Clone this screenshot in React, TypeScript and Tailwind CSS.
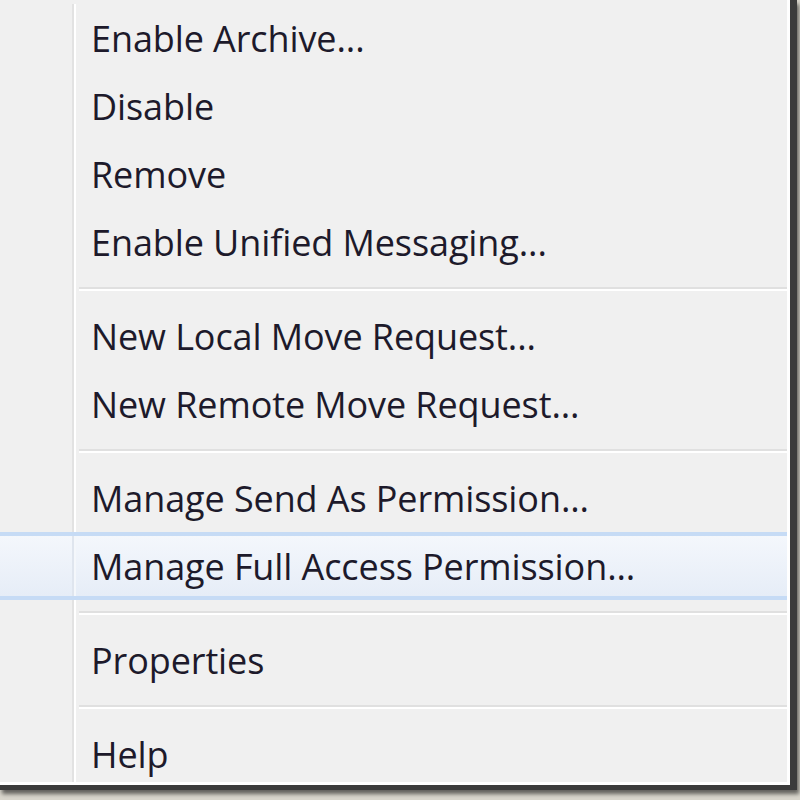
import React from "react";

type Entry = { label: string; active?: boolean } | "sep";

const entries: Entry[] = [
  { label: "Enable Archive..." },
  { label: "Disable" },
  { label: "Remove" },
  { label: "Enable Unified Messaging..." },
  "sep",
  { label: "New Local Move Request..." },
  { label: "New Remote Move Request..." },
  "sep",
  { label: "Manage Send As Permission..." },
  { label: "Manage Full Access Permission...", active: true },
  "sep",
  { label: "Properties" },
  "sep",
  { label: "Help" },
];

const Gutter = ({ faint }: { faint?: boolean }) => (
  <div className="flex shrink-0 self-stretch">
    <div className="w-[72px]" />
    <div className={faint ? "w-[2px] bg-[#dfe5ee]" : "w-[2px] bg-[#e2e2e2]"} />
    <div className={faint ? "w-[2px] bg-[#f4f7fb]" : "w-[2px] bg-white"} />
  </div>
);

const MenuRow = ({ label, active }: { label: string; active?: boolean }) => (
  <div
    className={
      active
        ? "flex h-[68px] border-y-[4px] border-[#c6dbf5] bg-gradient-to-b from-[#f4f7fc] to-[#e6edf7]"
        : "flex h-[68px]"
    }
  >
    <Gutter faint={active} />
    <div className="flex items-center pl-[15px] pt-[1px] text-[36px] font-medium leading-none tracking-[-0.1px] text-[#1d1a2b] whitespace-nowrap">
      {label}
    </div>
  </div>
);

const Separator = () => (
  <div className="flex h-[26px]">
    <Gutter />
    <div className="flex flex-1 flex-col justify-center pl-[3px]">
      <div className="h-[2px] bg-[#e0e0e0]" />
      <div className="h-[2px] bg-white" />
    </div>
  </div>
);

export default function App() {
  return (
    <div className="h-[800px] w-[800px] overflow-hidden bg-[#d9d6cc] font-['Open_Sans',sans-serif]">
      <div className="h-[790px] w-[797px] border-b-[5px] border-r-[7px] border-[#3b3b3b] bg-[#f0f0f0] shadow-[2px_4px_4px_rgba(0,0,0,0.55)]">
        <div className="h-full w-full overflow-hidden border-b-[3px] border-r-[3px] border-white">
          <div className="pt-[4px]">
            {entries.map((e, i) =>
              e === "sep" ? (
                <Separator key={i} />
              ) : (
                <MenuRow key={i} label={e.label} active={e.active} />
              )
            )}
          </div>
        </div>
      </div>
    </div>
  );
}
